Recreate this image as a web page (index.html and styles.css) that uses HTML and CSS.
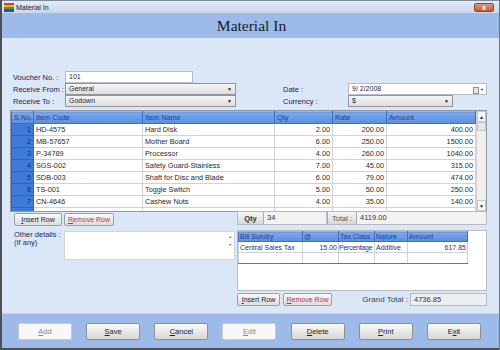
FILE: index.html
```html
<!DOCTYPE html>
<html lang="en">

<head>
    <meta charset="UTF-8">
    <meta name="viewport" content="width=device-width, initial-scale=1.0">
    <title>Material In</title>
    <link rel="stylesheet" href="styles.css">
</head>

<body>
    <div class="window">
        <div class="titlebar">
            <svg class="app-icon" width="10" height="9" viewBox="0 0 10 9">
                <rect x="0" y="0" width="10" height="2" fill="#d83a2a"/>
                <rect x="0" y="2" width="10" height="2" fill="#f0c030"/>
                <rect x="0" y="4" width="10" height="2" fill="#3a9a3a"/>
                <rect x="0" y="6" width="10" height="3" fill="#3050b0"/>
            </svg>
            <span class="title-text">Material In</span>
            <span class="close-btn">x</span>
        </div>

        <div class="header">
            <h1>Material In</h1>
        </div>

        <div class="content">
            <div class="form">
                <label>Voucher No. :</label>
                <div class="input voucher">101</div>
                <span></span><span></span><span></span>

                <label>Receive From :</label>
                <div class="select">General<span class="arrow">&#9660;</span></div>
                <span></span>
                <label>Date :</label>
                <div class="input date">9/ 2/2008<span class="cal"><span class="cal-box"></span>&#9660;</span></div>

                <label>Receive To :</label>
                <div class="select">Godown<span class="arrow">&#9660;</span></div>
                <span></span>
                <label>Currency :</label>
                <div class="select currency">$<span class="arrow">&#9660;</span></div>
            </div>

            <div class="items">
                <table class="grid">
                    <colgroup>
                        <col style="width: 22px"><col style="width: 109px"><col style="width: 132px">
                        <col style="width: 58px"><col style="width: 54px"><col style="width: 89px">
                    </colgroup>
                    <thead>
                        <tr><th>S.No.</th><th>Item Code</th><th>Item Name</th><th>Qty</th><th>Rate</th><th>Amount</th></tr>
                    </thead>
                    <tbody id="item-rows"></tbody>
                </table>
                <div class="scrollbar">
                    <span class="sb-btn">&#9650;</span>
                    <span class="sb-thumb"></span>
                    <span class="sb-track"></span>
                    <span class="sb-btn">&#9660;</span>
                </div>
            </div>

            <div class="lower">
                <div class="lower-left">
                    <div class="row-btns">
                        <button class="small-btn"><u>I</u>nsert Row</button>
                        <button class="small-btn remove"><u>R</u>emove Row</button>
                    </div>
                    <div class="other">
                        <label>Other details :<br>(If any)</label>
                        <div class="textarea">
                            <span class="ta-arrows">&#9650;<br><br>&#9660;</span>
                        </div>
                    </div>
                </div>

                <div class="lower-right">
                    <div class="totals">
                        <span class="cell-label qty">Qty</span>
                        <span class="cell-value qty-val">34</span>
                        <span class="cell-label total">Total :</span>
                        <span class="cell-value total-val">4119.00</span>
                    </div>
                    <div class="sundry">
                        <table class="grid sundry-grid">
                            <colgroup>
                                <col style="width: 64px"><col style="width: 36px"><col style="width: 36px">
                                <col style="width: 33px"><col style="width: 60px">
                            </colgroup>
                            <thead>
                                <tr><th>Bill Sundry</th><th>@</th><th>Tax Class</th><th>Nature</th><th>Amount</th></tr>
                            </thead>
                            <tbody>
                                <tr><td>Central Sales Tax</td><td class="num">15.00</td><td class="tight">Percentage</td><td>Additive</td><td class="num">617.85</td></tr>
                                <tr><td></td><td></td><td></td><td></td><td></td></tr>
                            </tbody>
                        </table>
                    </div>
                    <div class="sundry-foot">
                        <button class="small-btn ins2"><u>I</u>nsert Row</button>
                        <button class="small-btn remove rem2"><u>R</u>emove Row</button>
                        <span class="grand-label">Grand Total :</span>
                        <span class="grand-val">4736.85</span>
                    </div>
                </div>
            </div>
        </div>

        <div class="footer">
            <button class="btn" disabled><u>A</u>dd</button>
            <button class="btn"><u>S</u>ave</button>
            <button class="btn"><u>C</u>ancel</button>
            <button class="btn" disabled><u>E</u>dit</button>
            <button class="btn"><u>D</u>elete</button>
            <button class="btn"><u>P</u>rint</button>
            <button class="btn">E<u>x</u>it</button>
        </div>
    </div>

    <script>
        // Righe del materiale ricevuto
        const items = [
            { code: "HD-4575", name: "Hard Disk", qty: 2, rate: 200 },
            { code: "MB-57657", name: "Mother Board", qty: 6, rate: 250 },
            { code: "P-34789", name: "Processor", qty: 4, rate: 260 },
            { code: "SGS-002", name: "Safety Guard-Stainless", qty: 7, rate: 45 },
            { code: "SDB-003", name: "Shaft for Disc and Blade", qty: 6, rate: 79 },
            { code: "TS-001", name: "Toggle Switch", qty: 5, rate: 50 },
            { code: "CN-4646", name: "Cashew Nuts", qty: 4, rate: 35 }
        ];

        const body = document.getElementById("item-rows");
        items.forEach((it, i) => {
            body.innerHTML += `
                <tr>
                    <td class="sno">${i + 1}</td>
                    <td>${it.code}</td>
                    <td>${it.name}</td>
                    <td class="num">${it.qty.toFixed(2)}</td>
                    <td class="num">${it.rate.toFixed(2)}</td>
                    <td class="num">${(it.qty * it.rate).toFixed(2)}</td>
                </tr>
            `;
        });
        body.innerHTML += `<tr><td class="sno"></td><td></td><td></td><td></td><td></td><td></td></tr>`;
    </script>
</body>

</html>
```

FILE: styles.css
```css
* {
    box-sizing: border-box;
}

body {
    margin: 0;
    padding: 0;
    font-family: "Liberation Sans", Arial, sans-serif;
    font-size: 7.5px;
    color: #1c2250;
    background: #dbe6f6;
}

.window {
    width: 500px;
    height: 350px;
    display: flex;
    flex-direction: column;
    border-left: 2px solid #4a4f58;
    border-right: 1px solid #6f7780;
    overflow: hidden;
}

/* title bar */
.titlebar {
    height: 13px;
    display: flex;
    align-items: center;
    padding-left: 2px;
    background: linear-gradient(#e4ecf6, #c8d7ec);
    border-top: 1px solid #7d8a9c;
}

.app-icon {
    margin-right: 2px;
}

.title-text {
    font-size: 7px;
    color: #222;
}

.close-btn {
    margin-left: auto;
    margin-right: 5px;
    width: 20px;
    height: 9px;
    line-height: 8px;
    border-radius: 2px;
    background: linear-gradient(#e09a7c, #c05a3c);
    border: 1px solid #8a4a3a;
    color: white;
    font-size: 7px;
    font-weight: bold;
    text-align: center;
}

/* header */
.header {
    height: 25px;
    background: #9dbae8;
    display: flex;
    align-items: center;
    justify-content: center;
}

.header h1 {
    margin: 0;
    padding-left: 2px;
    font-family: "Liberation Serif", "Times New Roman", serif;
    font-weight: normal;
    font-size: 15.5px;
    color: #161c30;
}

/* content */
.content {
    flex: 1;
    padding: 33px 12px 0 8px;
}

.form {
    display: grid;
    grid-template-columns: 52px 171px 47px 65px 139px;
    grid-auto-rows: 12px;
    padding-left: 3px;
    align-items: center;
}

.form label {
    white-space: nowrap;
}

.input,
.select {
    height: 12px;
    line-height: 10px;
    padding-left: 3px;
    border: 1px solid #b4bcc8;
    background: white;
    position: relative;
    font-size: 7px;
}

.voucher {
    width: 128px;
}

.select {
    background: linear-gradient(#f6f6f6, #dedede);
    border-color: #8e959e;
}

.currency {
    width: 105px;
}

.arrow {
    position: absolute;
    right: 3px;
    top: 0;
    font-size: 5px;
    color: #222;
}

.date {
    padding-left: 3px;
}

.cal {
    position: absolute;
    right: 2px;
    top: 1px;
    font-size: 4px;
    display: flex;
    align-items: center;
    gap: 1px;
    color: #333;
}

.cal-box {
    width: 6px;
    height: 7px;
    border: 1px solid #8a8f98;
    background: #e8e8e8;
}

/* items grid */
.items {
    margin-top: 3px;
    height: 102px;
    display: flex;
    border: 1px solid #8f9aa8;
    background: white;
    overflow: hidden;
}

.grid {
    table-layout: fixed;
    border-collapse: collapse;
    width: 464px;
    font-size: 7.3px;
}

.grid th,
.grid td {
    height: 12px;
    padding: 0 2px;
    border: 1px solid #cfd3d8;
    white-space: nowrap;
    overflow: hidden;
    font-weight: normal;
    text-align: left;
}

.grid th {
    background: linear-gradient(#7ea8ea, #5a8ee0);
    color: #1f3f96;
    border-color: #9bb6e6 #3f6fc0;
    border-bottom: 1px solid #3f6fc0;
}

.grid td {
    color: #2a2a2a;
}

.grid td.sno {
    background: #3f7ad8;
    color: #1c2a6a;
    text-align: right;
    border-color: #2f64bc;
}

.grid td.num {
    text-align: right;
}

.scrollbar {
    width: 11px;
    display: flex;
    flex-direction: column;
    border-left: 1px solid #cfd3d8;
    background: #f0f0f0;
}

.sb-btn {
    height: 11px;
    font-size: 5px;
    line-height: 10px;
    text-align: center;
    background: #f6f6f6;
    border: 1px solid #c4c8ce;
}

.sb-thumb {
    height: 9px;
    background: #e4e6ea;
    border: 1px solid #c4c8ce;
}

.sb-track {
    flex: 1;
}

/* lower section */
.lower {
    display: flex;
    justify-content: space-between;
    margin-top: -1px;
}

.lower-left {
    width: 225px;
    padding-left: 4px;
}

.row-btns {
    display: flex;
    gap: 2px;
    margin-top: 2px;
}

.small-btn {
    height: 13px;
    padding: 0;
    font-family: inherit;
    font-size: 7px;
    color: #222;
    border: 1px solid #9aa0a8;
    border-radius: 2px;
    background: linear-gradient(#fafafa, #dcdcdc);
}

.row-btns .small-btn {
    width: 48px;
}

.row-btns .remove {
    width: 50px;
}

.small-btn.remove {
    color: #c0303a;
}

.other {
    display: flex;
    margin-top: 5px;
}

.other label {
    width: 50px;
    line-height: 8px;
    color: #2a2a50;
}

.textarea {
    width: 171px;
    height: 29px;
    background: white;
    border: 1px solid #d2d6dc;
    display: flex;
    justify-content: flex-end;
}

.ta-arrows {
    font-size: 3.5px;
    line-height: 4px;
    color: #666;
    padding: 3px 2px 0 0;
}

.lower-right {
    width: 250px;
}

.totals {
    display: flex;
    height: 14px;
    border: 1px solid #b6bcc4;
    background: #eceef0;
    align-items: stretch;
    font-size: 7.5px;
}

.cell-label {
    display: flex;
    align-items: center;
    justify-content: center;
    background: linear-gradient(#f6f6f6, #d8d8d8);
    border-right: 1px solid #a8aeb6;
    color: #333;
}

.qty {
    width: 26px;
    font-weight: bold;
}

.total {
    width: 30px;
    border-left: 1px solid #a8aeb6;
    color: #555;
}

.cell-value {
    padding: 1px 3px;
    color: #333;
    background: #f2f2f2;
}

.qty-val {
    width: 63px;
    border-right: 1px solid #b6bcc4;
}

.total-val {
    flex: 1;
}

.sundry {
    margin-top: 5px;
    height: 61px;
    background: white;
    border: 1px solid #b6bcc4;
}

.sundry-grid {
    width: 229px;
    font-size: 7px;
}

.sundry-grid th,
.sundry-grid td {
    height: 10px;
    padding: 0 1px;
}

.sundry-grid td {
    height: 11px;
    color: #3a2a6a;
}

.sundry-grid td.tight {
    letter-spacing: -0.25px;
    padding: 0;
}

.sundry-grid tr:last-child td {
    border-bottom: 1px solid #6f7680;
}

.sundry-foot {
    display: flex;
    align-items: center;
    margin-top: 2px;
}

.ins2 {
    width: 43px;
}

.rem2 {
    width: 49px;
    margin-left: 3px;
}

.grand-label {
    margin-left: auto;
    margin-right: 2px;
    font-size: 8px;
    color: #3a3f55;
}

.grand-val {
    width: 77px;
    height: 13px;
    padding: 1px 3px;
    background: #eceef0;
    border: 1px solid #b6bcc4;
    color: #333;
}

/* footer */
.footer {
    height: 37px;
    background: #9dbae8;
    border-top: 1px solid #c6d6ee;
    border-bottom: 2px solid #4a4f58;
    display: flex;
    justify-content: space-between;
    padding: 9px 18px 0 16px;
}

.btn {
    width: 54px;
    height: 17px;
    padding: 0;
    font-family: inherit;
    font-size: 7.5px;
    color: #222;
    border: 1px solid #8a9098;
    border-radius: 2px;
    background: linear-gradient(#fafafa, #d6d6d6);
}

.btn:disabled {
    background: #f8f8f8;
    border-color: #c8ccd2;
    color: #8a8a8a;
}
```
